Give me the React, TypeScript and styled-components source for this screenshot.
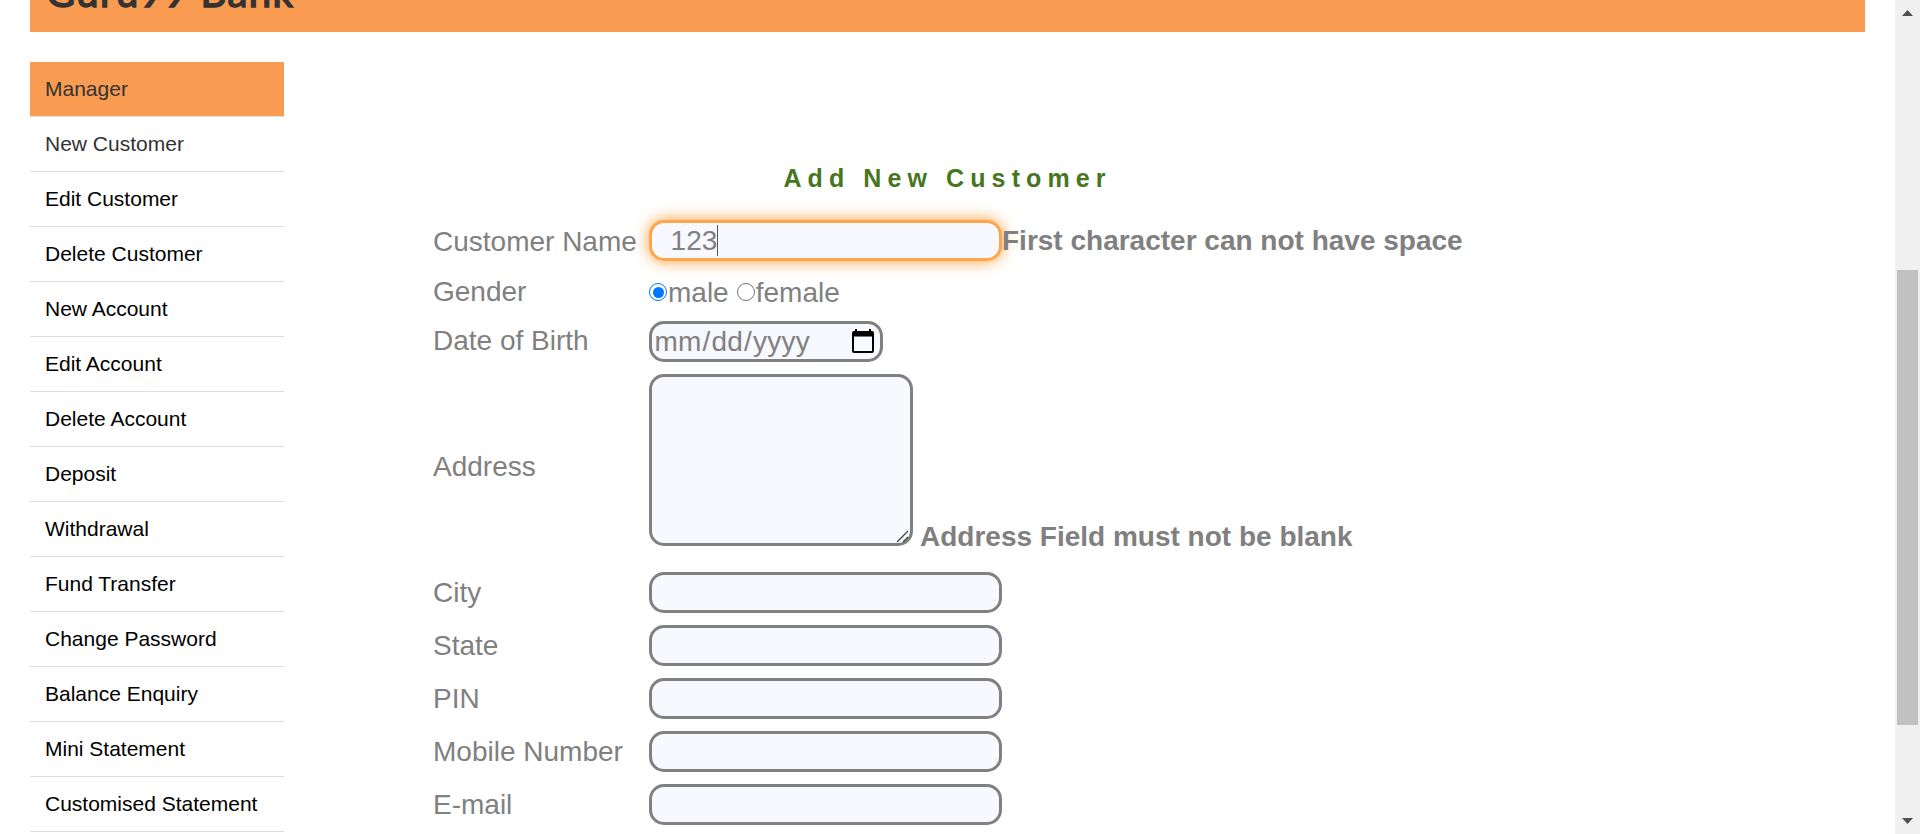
import React from "react";
import styled, { createGlobalStyle } from "styled-components";

const GlobalStyle = createGlobalStyle`
  * { box-sizing: border-box; }
  body {
    margin: 0;
    background: #fff;
    font-family: "Liberation Sans", Arial, sans-serif;
    overflow: hidden;
  }
`;

const Window = styled.div`
  display: flex;
  width: 1920px;
  height: 834px;
  overflow: hidden;
`;

const Page = styled.div`
  flex: 1;
  height: 834px;
  overflow: hidden;
  padding: 0 30px;
`;

const Banner = styled.header`
  display: flex;
  align-items: flex-end;
  height: 32px;
  padding: 0 16px;
  background: #f99b51;
  overflow: hidden;
`;

const BrandName = styled.span`
  flex: none;
  font-family: Lato, sans-serif;
  font-weight: 400;
  font-size: 40px;
  line-height: 79px;
  letter-spacing: 1.4px;
  color: #333;
  -webkit-text-stroke: 1.5px #333;
  white-space: nowrap;
`;

const Body = styled.div`
  display: flex;
  padding-top: 30px;
`;

const Menu = styled.nav`
  display: flex;
  flex-direction: column;
  width: 254px;
`;

const MenuItem = styled.a<{ $active?: boolean; $muted?: boolean }>`
  height: 55px;
  padding-left: 15px;
  border-bottom: 1px solid #dddddd;
  background: ${(p) => (p.$active ? "#f99b51" : "transparent")};
  background-clip: padding-box;
  color: ${(p) => (p.$muted ? "#333" : "#000")};
  font-size: 21px;
  line-height: 53px;
  white-space: nowrap;
`;

const Form = styled.form`
  display: flex;
  flex-direction: column;
  width: 1036px;
  margin-left: 149px;
  padding-top: 98px;
  color: gray;
  font-size: 28px;
  line-height: 32px;
`;

const Title = styled.h1`
  margin: 0;
  width: 1026px;
  height: 54px;
  padding-left: 3px;
  text-align: center;
  color: #47761e;
  font-size: 25px;
  line-height: 36px;
  letter-spacing: 6.1px;
`;

const Row = styled.div<{ $height?: number }>`
  display: flex;
  align-items: center;
  height: ${(p) => p.$height ?? 53}px;
`;

const Label = styled.label<{ $shift?: number }>`
  flex: none;
  width: 216px;
  padding-top: ${(p) => Math.max(p.$shift ?? 0, 0) * 2}px;
  padding-bottom: ${(p) => Math.max(-(p.$shift ?? 0), 0) * 2}px;
  white-space: nowrap;
`;

const Field = styled.div<{ $focused?: boolean; $width?: number }>`
  display: flex;
  flex: none;
  align-items: center;
  width: ${(p) => p.$width ?? 353}px;
  height: 41px;
  border: 3px solid ${(p) => (p.$focused ? "#ffa64d" : "gray")};
  border-radius: 15px;
  background: #f8f8ff;
  box-shadow: ${(p) => (p.$focused ? "0 0 15px 0 #ff9933" : "none")};
  white-space: pre;
`;

const TypedText = styled.span`
  height: 31px;
  margin-left: 3px;
  border-right: 1px solid #555;
  line-height: 31px;
`;

const Hint = styled.strong`
  position: relative;
  white-space: nowrap;
`;

const Radio = styled.span<{ $checked?: boolean }>`
  display: flex;
  flex: none;
  align-items: center;
  justify-content: center;
  width: 18px;
  height: 18px;
  margin: 2px 1px 0 0;
  border: ${(p) => (p.$checked ? "1.5px solid #0075ff" : "1.3px solid #767676")};
  border-radius: 50%;
  background: #fff;

  &::after {
    content: "";
    width: 11px;
    height: 11px;
    border-radius: 50%;
    background: ${(p) => (p.$checked ? "#0075ff" : "transparent")};
  }
`;

const RadioText = styled.span`
  margin-right: 8px;
  padding-top: 3px;
`;

const DatePart = styled.span`
  padding: 0 1px;
`;

const DateText = styled.span`
  margin-left: 1.5px;
  letter-spacing: 0.2px;
`;

const CalendarIcon = styled.svg`
  margin: 0 6px 2px auto;
`;

const AddressArea = styled.div`
  display: flex;
  align-items: flex-end;
  height: 198px;
  padding: 6px 0 20px;
`;

const TextBox = styled.div`
  display: flex;
  align-items: flex-end;
  justify-content: flex-end;
  width: 264px;
  height: 172px;
  border: 3px solid gray;
  border-radius: 15px;
  background: #f8f8ff;
`;

const AddressHint = styled.strong`
  margin-left: 7px;
  margin-bottom: -7px;
  white-space: nowrap;
`;

const Scrollbar = styled.aside`
  display: flex;
  flex: none;
  flex-direction: column;
  align-items: center;
  width: 25px;
  height: 834px;
  padding: 10px 2px;
  background: #f0f0f0;
`;

const Thumb = styled.div`
  width: 21px;
  height: 455px;
  margin: 254px 0 auto;
  background: #c1c1c1;
`;

const menuItems = [
  "Manager",
  "New Customer",
  "Edit Customer",
  "Delete Customer",
  "New Account",
  "Edit Account",
  "Delete Account",
  "Deposit",
  "Withdrawal",
  "Fund Transfer",
  "Change Password",
  "Balance Enquiry",
  "Mini Statement",
  "Customised Statement",
];

const plainFields = ["City", "State", "PIN", "Mobile Number", "E-mail"];

export default function App() {
  return (
    <Window>
      <GlobalStyle />
      <Page>
        <Banner>
          <BrandName>Guru99 Bank</BrandName>
        </Banner>
        <Body>
          <Menu>
            {menuItems.map((item, i) => (
              <MenuItem key={item} $active={i === 0} $muted={i < 2}>
                {item}
              </MenuItem>
            ))}
          </Menu>
          <Form>
            <Title>Add New Customer</Title>
            <Row>
              <Label $shift={1}>Customer Name</Label>
              <Field $focused>
                <TypedText>{"  123"}</TypedText>
              </Field>
              <Hint>First character can not have space</Hint>
            </Row>
            <Row $height={48}>
              <Label $shift={1}>Gender</Label>
              <Radio $checked />
              <RadioText>male</RadioText>
              <Radio />
              <RadioText>female</RadioText>
            </Row>
            <Row>
              <Label $shift={-1}>Date of Birth</Label>
              <Field $width={234}>
                <DateText>
                  <DatePart>mm</DatePart>/<DatePart>dd</DatePart>/<DatePart>yyyy</DatePart>
                </DateText>
                <CalendarIcon width="22" height="24" viewBox="0 0 22 24">
                  <path d="M3 0h2v2h12V0h2v2h1a2 2 0 0 1 2 2v18a2 2 0 0 1-2 2H2a2 2 0 0 1-2-2V4a2 2 0 0 1 2-2h1zM2 7.500v14.500h18V7.500z" fillRule="evenodd" />
                </CalendarIcon>
              </Field>
            </Row>
            <Row $height={198}>
              <Label>Address</Label>
              <AddressArea>
                <TextBox>
                  <svg width="14" height="14" viewBox="0 0 14 14">
                    <path d="M1 13 12 2M7 13l5-5" stroke="#444" strokeWidth="1.3" fill="none" />
                  </svg>
                </TextBox>
                <AddressHint>Address Field must not be blank</AddressHint>
              </AddressArea>
            </Row>
            {plainFields.map((name) => (
              <Row key={name}>
                <Label>{name}</Label>
                <Field />
              </Row>
            ))}
          </Form>
        </Body>
      </Page>
      <Scrollbar>
        <svg width="11" height="6" viewBox="0 0 11 6">
          <path d="M0 6 5.500 0 11 6z" fill="#505050" />
        </svg>
        <Thumb />
        <svg width="11" height="6" viewBox="0 0 11 6">
          <path d="M0 0h11L5.500 6z" fill="#505050" />
        </svg>
      </Scrollbar>
    </Window>
  );
}
